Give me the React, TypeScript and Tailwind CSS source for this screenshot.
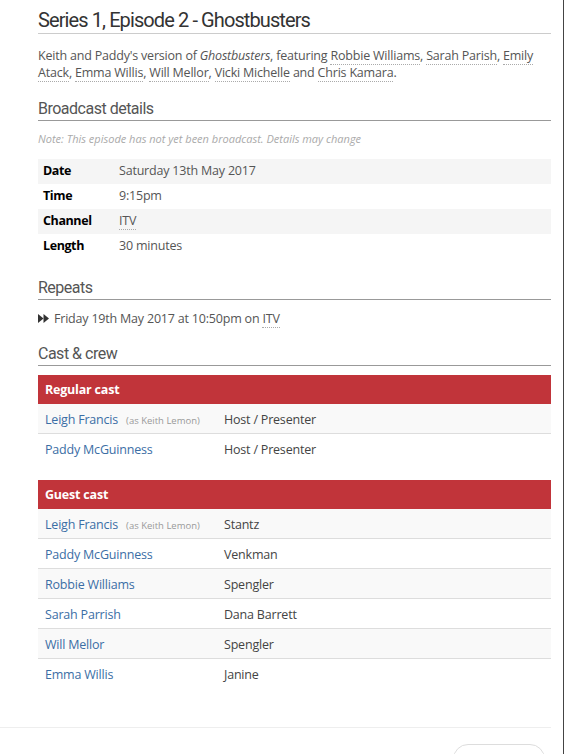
import React from 'react';

const heading = "font-['Roboto',sans-serif]";
const body = "font-['Open_Sans','Noto_Sans',sans-serif]";

const Dotted: React.FC<{ children: React.ReactNode }> = ({ children }) => (
  <span className="border-b border-dotted border-[#aaa]">{children}</span>
);

const SectionTitle: React.FC<{ children: React.ReactNode; className?: string }> = ({ children, className }) => (
  <h2 className={`${heading} text-[16px] leading-[22px] tracking-[-0.5px] text-[#555] border-b border-[#999] ${className ?? ''}`}>{children}</h2>
);

const details = [
  { label: 'Date', value: 'Saturday 13th May 2017' },
  { label: 'Time', value: '9:15pm' },
  { label: 'Channel', value: 'ITV', link: true },
  { label: 'Length', value: '30 minutes' },
];

interface CastRow {
  name: string;
  as?: string;
  role: string;
}

const regular: CastRow[] = [
  { name: 'Leigh Francis', as: 'Keith Lemon', role: 'Host / Presenter' },
  { name: 'Paddy McGuinness', role: 'Host / Presenter' },
];

const guests: CastRow[] = [
  { name: 'Leigh Francis', as: 'Keith Lemon', role: 'Stantz' },
  { name: 'Paddy McGuinness', role: 'Venkman' },
  { name: 'Robbie Williams', role: 'Spengler' },
  { name: 'Sarah Parrish', role: 'Dana Barrett' },
  { name: 'Will Mellor', role: 'Spengler' },
  { name: 'Emma Willis', role: 'Janine' },
];

const CastTable: React.FC<{ title: string; rows: CastRow[]; className?: string }> = ({ title, rows, className }) => (
  <div className={className}>
    <div className="h-[29px] bg-[#c1343a] px-[7px] pt-[1px] flex items-center text-white font-bold text-[12.5px]">{title}</div>
    {rows.map((r, i) => (
      <div
        key={i}
        className={`h-[30px] flex items-center px-[7px] pt-[3px] text-[12.5px] ${i % 2 === 0 ? 'bg-[#f9f9f9]' : 'bg-white'} ${i < rows.length - 1 ? 'border-b border-[#ddd]' : ''}`}
      >
        <div className="w-[179px] flex items-baseline">
          <span className="text-[#3b6ea5]">{r.name}</span>
          {r.as && <span className="ml-[8px] text-[9.5px] tracking-normal text-[#999]">(as {r.as})</span>}
        </div>
        <div className="text-[#444]">{r.role}</div>
      </div>
    ))}
  </div>
);

export default function App() {
  return (
    <div className={`${body} tracking-[-0.2px] w-[564px] h-[754px] overflow-hidden bg-white border-r border-[#444]`}>
      <div className="pl-[38px] pr-[12px]">
        <h1 className={`${heading} mt-[8px] text-[20px] leading-[24px] tracking-[-0.9px] text-[#333] pb-[1px] border-b border-[#ccc]`}>
          Series 1, Episode 2 - Ghostbusters
        </h1>
        <p className="mt-[13px] text-[12.5px] leading-[17px] text-[#555]">
          Keith and Paddy's version of <i>Ghostbusters</i>, featuring <Dotted>Robbie Williams</Dotted>,{' '}
          <Dotted>Sarah Parish</Dotted>, <Dotted>Emily Atack</Dotted>, <Dotted>Emma Willis</Dotted>,{' '}
          <Dotted>Will Mellor</Dotted>, <Dotted>Vicki Michelle</Dotted> and <Dotted>Chris Kamara</Dotted>.
        </p>

        <SectionTitle className="mt-[17px]">Broadcast details</SectionTitle>
        <p className="mt-[11px] text-[11px] leading-[14px] tracking-normal italic text-[#aaa]">
          Note: This episode has not yet been broadcast. Details may change
        </p>
        <div className="mt-[13px]">
          {details.map((d, i) => (
            <div key={d.label} className={`h-[25px] flex items-center px-[5px] text-[12.5px] ${i % 2 === 0 ? 'bg-[#f5f5f5]' : ''}`}>
              <div className="w-[76px] font-bold text-black tracking-[-0.4px]">{d.label}</div>
              <div className="text-[#555]">{d.link ? <Dotted>{d.value}</Dotted> : d.value}</div>
            </div>
          ))}
        </div>

        <SectionTitle className="mt-[18px]">Repeats</SectionTitle>
        <div className="mt-[10px] flex items-center text-[12.5px] leading-[17px] text-[#555]">
          <svg width="11" height="9" viewBox="0 0 11 9" className="mr-[5px]">
            <path d="M0 0 L5.5 4.5 L0 9 Z" fill="#333" />
            <path d="M5.5 0 L11 4.5 L5.5 9 Z" fill="#333" />
          </svg>
          <span>
            Friday 19th May 2017 at 10:50pm on <Dotted>ITV</Dotted>
          </span>
        </div>

        <SectionTitle className="mt-[16px]">Cast &amp; crew</SectionTitle>
        <CastTable className="mt-[9px]" title="Regular cast" rows={regular} />
        <CastTable className="mt-[16px]" title="Guest cast" rows={guests} />
      </div>

      <div className="mt-[38px] w-[551px] border-t border-[#eee]">
        <div className="flex justify-end pr-[6px] pt-[16px]">
          <div className="w-[92px] h-[30px] rounded-full border border-[#ddd] pl-[13px] pt-[6px] text-[12.5px] text-[#555]">
            Episode 3 ›
          </div>
        </div>
      </div>
    </div>
  );
}
